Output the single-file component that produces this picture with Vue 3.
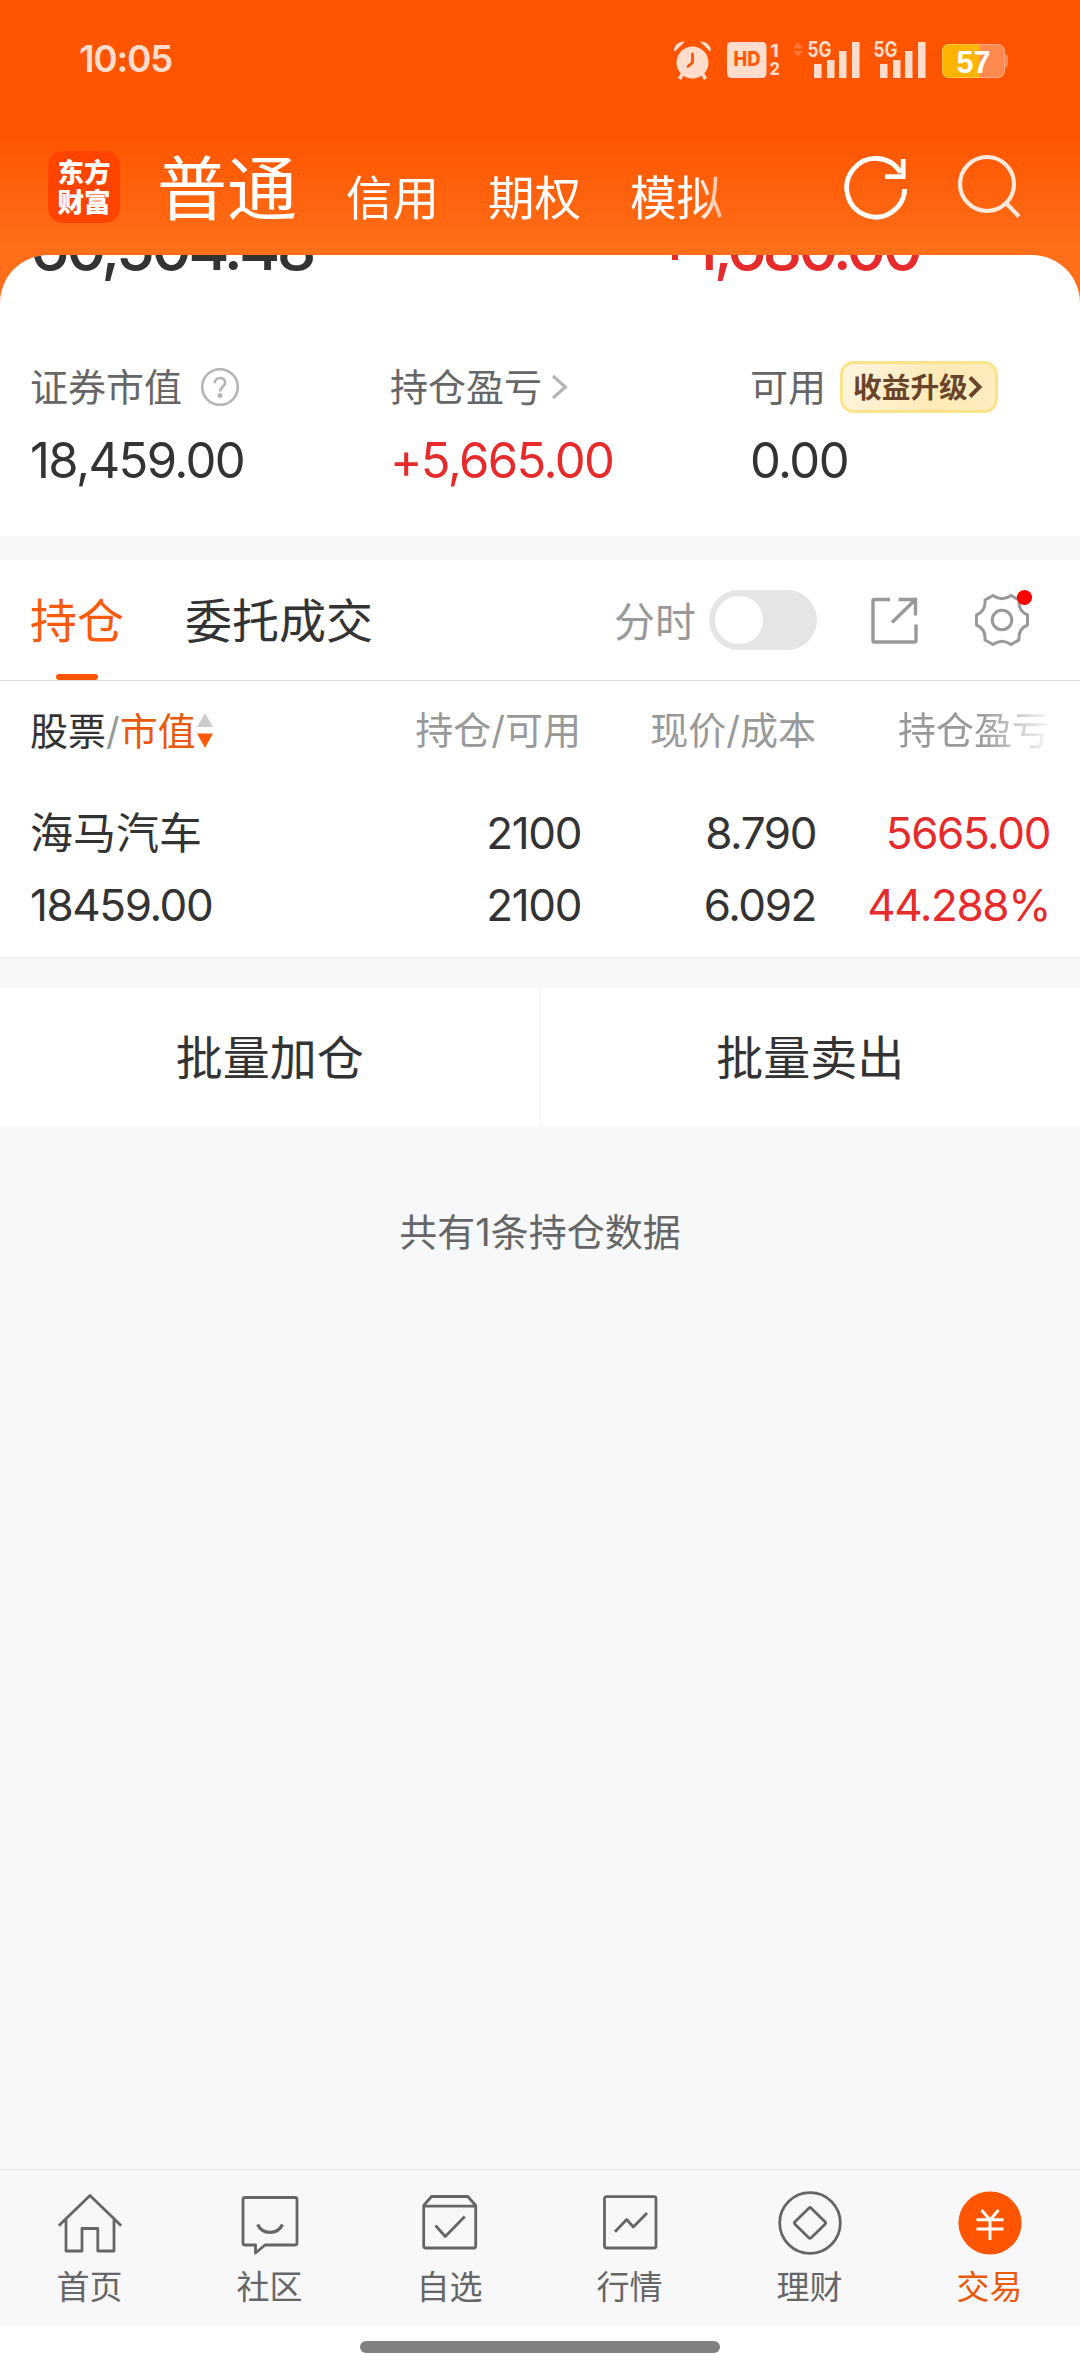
<script setup>
const accountTabs = ['信用', '期权', '模拟']
const navItems = [
  { id: 'home', label: '首页' },
  { id: 'community', label: '社区' },
  { id: 'watch', label: '自选' },
  { id: 'market', label: '行情' },
  { id: 'wealth', label: '理财' },
  { id: 'trade', label: '交易' },
]
</script>

<template>
  <div class="page">
    <header class="header">
      <div class="status">
        <span class="time">10:05</span>
        <svg class="status-icons" width="344" height="44" viewBox="670 38 344 44">
          <g fill="#ffdccb">
            <circle cx="692.500" cy="62.500" r="16" />
            <path d="M674 51c0-6 5-10 11-9.500l-9.500 9.500zM711 51c0-6-5-10-11-9.500l9.500 9.500z" />
            <path d="M683 73l-3.500 6M702 73l3.500 6" stroke="#ffdccb" stroke-width="3.500" />
            <path d="M692.500 54v8.500l-4.500 4" fill="none" stroke="#ff5500" stroke-width="2.800" stroke-linecap="round" />
            <rect x="727" y="42" width="39.500" height="36" rx="4.500" />
            <text x="733.500" y="66" font-size="19.500" font-weight="800" fill="#ff5a0a" textLength="27" lengthAdjust="spacingAndGlyphs">HD</text>
            <text x="770" y="57" font-size="18" font-weight="700" textLength="9" lengthAdjust="spacingAndGlyphs">1</text>
            <text x="769.500" y="74.500" font-size="18" font-weight="700" textLength="10.500" lengthAdjust="spacingAndGlyphs">2</text>
            <path d="M793 48.500l5-6.500 5 6.500zM793 51l5 6 5-6z" opacity=".25" />
            <text x="807.500" y="57" font-size="21" font-weight="700" textLength="24" lengthAdjust="spacingAndGlyphs">5G</text>
            <path d="M814 64h7.500v14H814zM827 60h7.500v18H827zM839 51h7.500v27H839zM852 42h7.500v36H852z" />
            <text x="873.500" y="57" font-size="21" font-weight="700" textLength="24" lengthAdjust="spacingAndGlyphs">5G</text>
            <path d="M880 64h7.500v14H880zM893 60h7.500v18H893zM905 51h7.500v27H905zM918 42h7.500v36H918z" />
          </g>
          <rect x="942" y="44" width="63" height="34" rx="7" fill="#ff8a50" />
          <path d="M1005 54.500h1q2 0 2 2v9q0 2-2 2h-1z" fill="#ff8a50" />
          <path d="M949 44h31v34h-31q-7 0-7-7V51q0-7 7-7z" fill="#ffb400" />
          <rect x="942.500" y="44.500" width="62" height="33" rx="6.500" fill="none" stroke="#fff" stroke-opacity=".25" />
          <text class="battery-text" x="956.500" y="72.500" font-size="31" font-weight="700" fill="#fff" textLength="34" lengthAdjust="spacingAndGlyphs">57</text>
        </svg>
      </div>
      <div class="topbar">
        <div class="logo"><span>东方</span><span>财富</span></div>
        <h1>普通</h1>
        <nav class="accounts">
          <span v-for="tab in accountTabs" :key="tab">{{ tab }}</span>
        </nav>
        <svg class="refresh" width="66" height="66" viewBox="843 155 66 66" fill="none" stroke="#fff" stroke-width="4.800">
          <path d="M904.700 189A29 29.300 0 1 1 900.500 172.500" />
          <path d="M903.200 159v18M885 176.700h20.400" />
        </svg>
        <svg class="search" width="66" height="66" viewBox="956 153 66 66" fill="none" stroke="#ffe8dc" stroke-width="4.200">
          <circle cx="987" cy="184" r="27" />
          <path d="M1005.500 202.500L1019 216.500" />
        </svg>
      </div>
    </header>

    <section class="summary">
      <div class="totals">
        <span class="total">60,504.48</span>
        <span class="total gain"><i>+</i>1,680.00</span>
      </div>
      <div class="stats">
        <div class="stat">
          <div class="label">
            <span>证券市值</span>
            <svg class="help" width="40" height="40" viewBox="0 0 40 40" fill="none" stroke="#b4b4b4" stroke-width="2.600">
              <circle cx="20" cy="20" r="17.800" />
              <path d="M14.700 16.300c0-7 10.400-7 10.400-.6 0 4-5 4-5 8.800" />
              <circle cx="20" cy="28.600" r="1.200" fill="#b4b4b4" />
            </svg>
          </div>
          <div class="value">18,459.00</div>
        </div>
        <div class="stat">
          <div class="label">
            <span>持仓盈亏</span>
            <svg class="more" width="18" height="28" viewBox="0 0 18 28" fill="none" stroke="#b4b4b4" stroke-width="3"><path d="M2 3l12.500 11L2 25" /></svg>
          </div>
          <div class="value gain">+5,665.00</div>
        </div>
        <div class="stat">
          <div class="label">
            <span>可用</span>
            <div class="badge"><span>收益升级</span><svg width="15" height="24" viewBox="0 0 15 24" fill="none" stroke="#69452b" stroke-width="4"><path d="M2 2.500L11.500 12 2 21.500" /></svg></div>
          </div>
          <div class="value">0.00</div>
        </div>
      </div>
    </section>

    <section class="panel">
      <div class="tabs">
        <span class="tab active">持仓</span>
        <span class="tab">委托成交</span>
        <span class="minute">分时</span>
        <span class="toggle"></span>
        <svg class="share" width="50" height="50" viewBox="869 595 50 50" fill="none" stroke="#999" stroke-width="3.400">
          <path d="M890 599.500h-15.500q-1.500 0-1.500 1.500v39.500q0 1.500 1.500 1.500h40q1.500 0 1.500-1.500v-16M898.500 599.500H915.500V615.500M915 600l-23 22.500" />
        </svg>
        <svg class="gear" width="62" height="62" viewBox="972 589 62 62" fill="none" stroke="#999" stroke-width="3">
          <path d="M993 595.500Q1002 602 1011 595.500L1019 600Q1018 611 1027.500 615V625Q1018 629 1019 640L1011 644.500Q1002 638 993 644.500L985 640Q986 629 976.500 625V615Q986 611 985 600Z" stroke-linejoin="round" />
          <circle cx="1002" cy="620" r="9.800" />
          <circle cx="1024.500" cy="597.500" r="7.600" fill="#f00" stroke="none" />
        </svg>
      </div>

      <div class="grid head">
        <span class="first"><b>股票</b>/<em>市值</em><svg width="16" height="36" viewBox="0 0 16 36"><path d="M8 0l8 14H0z" fill="#ccc" /><path d="M0 20.500h16L8 35z" fill="#fa5a0a" /></svg></span>
        <span>持仓/可用</span>
        <span>现价/成本</span>
        <span class="fade">持仓盈亏</span>
      </div>
      <div class="grid row">
        <span class="name">海马汽车</span>
        <span>2100</span>
        <span>8.790</span>
        <span class="gain">5665.00</span>
      </div>
      <div class="grid row second">
        <span>18459.00</span>
        <span>2100</span>
        <span>6.092</span>
        <span class="gain">44.288%</span>
      </div>
    </section>

    <section class="actions">
      <button>批量加仓</button>
      <button>批量卖出</button>
    </section>
    <p class="count">共有1条持仓数据</p>

    <nav class="nav">
      <a v-for="item in navItems" :key="item.id" :class="{ current: item.id === 'trade' }">
        <svg width="64" height="64" viewBox="0 0 64 64" fill="none" stroke="#666" stroke-width="2.800" stroke-linejoin="round">
          <path v-if="item.id === 'home'" d="M.8 34.700L32 4.500l31.200 30.200M8 28.500V60h16V37.500h15.800V60H56V28.500" />
          <template v-else-if="item.id === 'community'">
            <path d="M7 6.500H57q2 0 2 2V52q0 2-2 2H27l-9.500 8V54H7q-2 0-2-2V8.500q0-2 2-2z" />
            <path d="M19.600 33.500c5 10.500 19.900 10.500 24.900 0" stroke-width="3.200" />
          </template>
          <template v-else-if="item.id === 'watch'">
            <path d="M5.700 14.500L13.500 5.500h36.300l7.900 9V55q0 2-2 2h-48q-2 0-2-2zM5.700 15.200h52" />
            <path d="M17.500 34.500l9.800 11L46.700 25.500" />
          </template>
          <template v-else-if="item.id === 'market'">
            <rect x="6.500" y="5.700" width="51.500" height="51.300" rx="2" />
            <path d="M17 40.700l11.700-12.200 6.600 7.500L49 22" />
          </template>
          <template v-else-if="item.id === 'wealth'">
            <circle cx="32" cy="32" r="30.300" />
            <path d="M30.800 17.200q1.200-1.200 2.400 0L47 30.800q1.200 1.200 0 2.400L33.200 46.800q-1.200 1.200-2.400 0L17 33.200q-1.200-1.200 0-2.400z" />
          </template>
          <template v-else>
            <circle cx="32" cy="32" r="31.600" fill="#ff5500" stroke="none" />
            <path d="M23.500 19L32 29l8.500-10M18.500 28.700h27M18.500 38h27M32 29v20" stroke="#fff" stroke-width="2.900" />
          </template>
        </svg>
        <span>{{ item.label }}</span>
      </a>
    </nav>
    <footer class="gesture"><i></i></footer>
  </div>
</template>

<style>
body { margin: 0; background: #f7f8fa; }
</style>

<style scoped>
.page {
  width: 1080px;
  height: 2374px;
  display: flex;
  flex-direction: column;
  background: #f7f8fa;
  color: #333;
  font-family: Inter, "Noto Sans CJK SC", sans-serif;
  font-weight: 400;
  overflow: hidden;
}
.header {
  flex: none;
  height: 310px;
  margin-bottom: -55px;
  background: linear-gradient(#ff5500 0, #ff5500 135px, #ff6e18 250px, #ff6e18 100%);
  color: #fff;
}
.status {
  height: 120px;
  display: flex;
  justify-content: space-between;
  padding: 0 66px 0 79px;
  box-sizing: border-box;
}
.time {
  margin-top: 36px;
  font-size: 37px;
  line-height: 45px;
  font-weight: 600;
  letter-spacing: -1.300px;
  color: #ffdccb;
}
.status-icons { margin-top: 38px; }
.battery-text { font-family: "Liberation Sans", sans-serif; }
.topbar {
  height: 135px;
  display: flex;
  align-items: flex-start;
  padding-left: 48px;
}
.logo {
  width: 72px;
  height: 72px;
  margin-top: 31px;
  border-radius: 15px;
  background: #ff4400;
  display: flex;
  flex-direction: column;
  align-items: center;
  justify-content: center;
  font-size: 26.500px;
  line-height: 30px;
  font-weight: 800;
}
h1 {
  margin: 34px 0 0 37px;
  width: 140px;
  font-size: 70px;
  line-height: 72px;
  font-weight: 400;
}
.accounts {
  display: flex;
  gap: 49px;
  width: 430px;
  margin: 48px 0 0 49px;
  font-size: 46.500px;
  line-height: 60px;
  -webkit-mask-image: linear-gradient(90deg, #000 350px, transparent 410px);
  mask-image: linear-gradient(90deg, #000 350px, transparent 410px);
}
.refresh { margin: 35px 0 0 67px; }
.search { margin: 33px 0 0 47px; }
.refresh, .search, .status-icons, .accounts { flex: none; }
.summary {
  flex: none;
  height: 281px;
  box-sizing: border-box;
  background: #fff;
  border-radius: 48px 48px 0 0;
  overflow: hidden;
}
.totals {
  display: flex;
  height: 80px;
  margin: -48px 0 0 30px;
}
.total {
  flex: none;
  width: 624px;
  font-size: 63px;
  line-height: 80px;
  font-weight: 500;
  letter-spacing: -3.700px;
}
.total.gain { letter-spacing: -4.200px; }
.total i { font-style: normal; line-height: 1; vertical-align: 7px; }
.gain { color: #e52b2b; }
.stats {
  display: flex;
  margin: 71px 0 0 30px;
}
.stat { flex: none; width: 360px; }
.label {
  display: flex;
  align-items: center;
  height: 58px;
  font-size: 38px;
  color: #666;
}
.label > span { margin-top: -6px; }
.help { margin-left: 18px; }
.more { margin-left: 9px; }
.badge {
  box-sizing: border-box;
  display: flex;
  align-items: center;
  width: 158px;
  height: 52px;
  margin-left: 14px;
  padding-left: 10px;
  border: 3px solid #fae38a;
  border-radius: 14px;
  background: linear-gradient(110deg, #fff5e0, #ffeab8 60%, #ffedc0);
  color: #69452b;
  font-size: 28.700px;
  font-weight: 700;
  white-space: nowrap;
}
.badge span { margin-top: -3px; }
.value {
  margin-top: 15px;
  font-size: 49px;
  line-height: 60px;
  font-weight: 400;
  letter-spacing: -1.600px;
}
.panel {
  flex: none;
  height: 398px;
  box-sizing: border-box;
  margin-top: 24px;
  background: #fff;
  border-bottom: 1px solid #ededef;
}
.tabs {
  height: 121px;
  box-sizing: border-box;
  border-bottom: 1px solid #ddd;
  display: flex;
  align-items: center;
  padding-left: 30px;
}
.tab {
  position: relative;
  height: 120px;
  margin-right: 61px;
  font-size: 47px;
  line-height: 122px;
}
.active { color: #fa5a0a; }
.active::after {
  content: "";
  position: absolute;
  left: 26px;
  bottom: 0;
  width: 42px;
  height: 6px;
  border-radius: 3px;
  background: #ff5500;
}
.minute {
  margin-left: 180px;
  margin-top: -3px;
  font-size: 41px;
  color: #999;
}
.toggle {
  box-sizing: border-box;
  width: 108px;
  height: 60px;
  margin-left: 13px;
  padding: 6px;
  border-radius: 30px;
  background: #e5e5e7;
}
.toggle::after {
  content: "";
  display: block;
  width: 48px;
  height: 48px;
  border-radius: 50%;
  background: #fff;
}
.share { margin-left: 52px; }
.gear { margin-left: 53px; }
.grid {
  display: grid;
  grid-template-columns: 281px 270px 235px 234px;
  margin-left: 30px;
  text-align: right;
}
.grid > :first-child { text-align: left; }
.head {
  height: 100px;
  line-height: 98px;
  font-size: 38px;
  color: #999;
}
.first { display: flex; align-items: center; }
.first b { font-weight: 400; color: #333; }
.first em { font-style: normal; color: #e8590c; margin-right: 1px; }
.fade {
  -webkit-mask-image: linear-gradient(90deg, #000 165px, rgba(0, 0, 0, .12) 230px);
  mask-image: linear-gradient(90deg, #000 165px, rgba(0, 0, 0, .12) 230px);
}
.row {
  height: 72px;
  margin-top: 16px;
  line-height: 72px;
  font-size: 44px;
  font-weight: 400;
  letter-spacing: -1.400px;
}
.row .name { font-size: 43px; letter-spacing: 0; }
.second { margin-top: 0; }
.actions {
  flex: none;
  display: flex;
  height: 138px;
  margin-top: 30px;
  background: #fff;
}
.actions button {
  flex: 1;
  border: 0;
  padding: 0 0 5px;
  background: none;
  color: #333;
  font: inherit;
  font-size: 47px;
}
.actions button + button { border-left: 1px solid #f3f3f5; }
.count {
  margin: 76px 0 0;
  text-align: center;
  font-size: 38px;
  line-height: 60px;
  color: #666;
}
.nav {
  flex: none;
  display: flex;
  height: 157px;
  box-sizing: border-box;
  margin-top: auto;
  border-top: 1px solid #e2e3e6;
  background: #f8f8fa;
}
.nav a {
  width: 179px;
  margin-right: 1px;
  display: flex;
  flex-direction: column;
  align-items: center;
  padding-top: 21px;
  font-size: 33px;
  line-height: 50px;
  color: #666;
}
.nav span { margin-top: 7px; }
.nav .current { color: #e8590c; }
.gesture {
  flex: none;
  height: 48px;
  background: #fff;
  display: flex;
  justify-content: center;
}
.gesture i {
  width: 360px;
  height: 12px;
  margin-top: 15px;
  border-radius: 6px;
  background: #808080;
}
</style>
